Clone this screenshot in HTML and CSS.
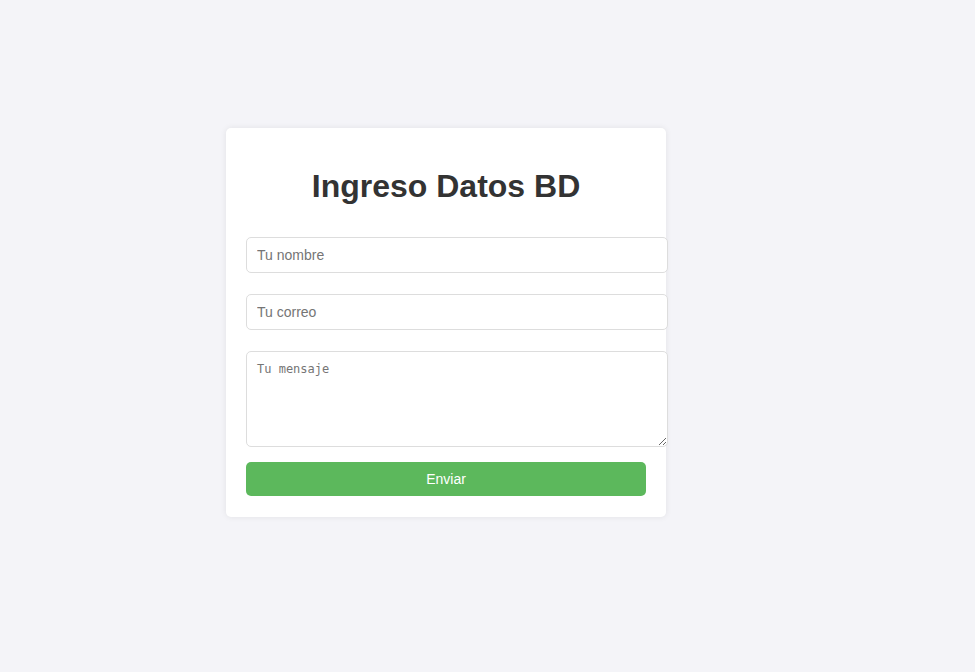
FILE: index.html
```html
<!DOCTYPE html>
<html lang="es">
<head>
<meta charset="utf-8">
<title>Ingreso Datos BD</title>
<link rel="stylesheet" href="styles.css">
</head>
<body>
<div class="page">
  <form class="card">
    <h2 class="title">Ingreso Datos BD</h2>
    <input class="field" type="text" placeholder="Tu nombre">
    <input class="field" type="email" placeholder="Tu correo">
    <textarea class="field area" placeholder="Tu mensaje"></textarea>
    <button class="submit" type="button">Enviar</button>
  </form>
</div>
</body>
</html>
```
FILE: styles.css
```css
html, body {
  margin: 0;
  padding: 0;
  background: #f4f4f8;
  font-family: "Liberation Sans", Arial, sans-serif;
}
.page {
  padding: 128px 0 0 226px;
  min-height: 544px;
}
.card {
  display: block;
  width: 400px;
  padding: 20px 20px 21px;
  background: #fff;
  border-radius: 5px;
  box-shadow: 0 0 6px rgba(0, 0, 0, 0.08);
}
.title {
  margin: 20px 0 32px;
  font-size: 32px;
  font-weight: bold;
  color: #333;
  text-align: center;
  line-height: 37px;
}
.field {
  display: block;
  width: 422px;
  height: 36px;
  padding: 10px;
  margin: 0 0 21px;
  border: 1px solid #ddd;
  border-radius: 5px;
  font-family: "Liberation Sans", Arial, sans-serif;
  font-size: 14px;
  line-height: 16px;
  color: #333;
  background: #fff;
  box-sizing: border-box;
  outline: none;
}
.field::placeholder {
  color: #757575;
}
.area {
  height: 96px;
  margin-bottom: 15px;
  font-family: "DejaVu Sans Mono", "Liberation Mono", monospace;
  font-size: 12px;
  line-height: 15px;
  resize: both;
}
.submit {
  display: block;
  width: 400px;
  height: 34px;
  padding: 0;
  border: none;
  border-radius: 5px;
  background: #5cb85c;
  color: #fff;
  font-family: "Liberation Sans", Arial, sans-serif;
  font-size: 14px;
  cursor: pointer;
}
```
